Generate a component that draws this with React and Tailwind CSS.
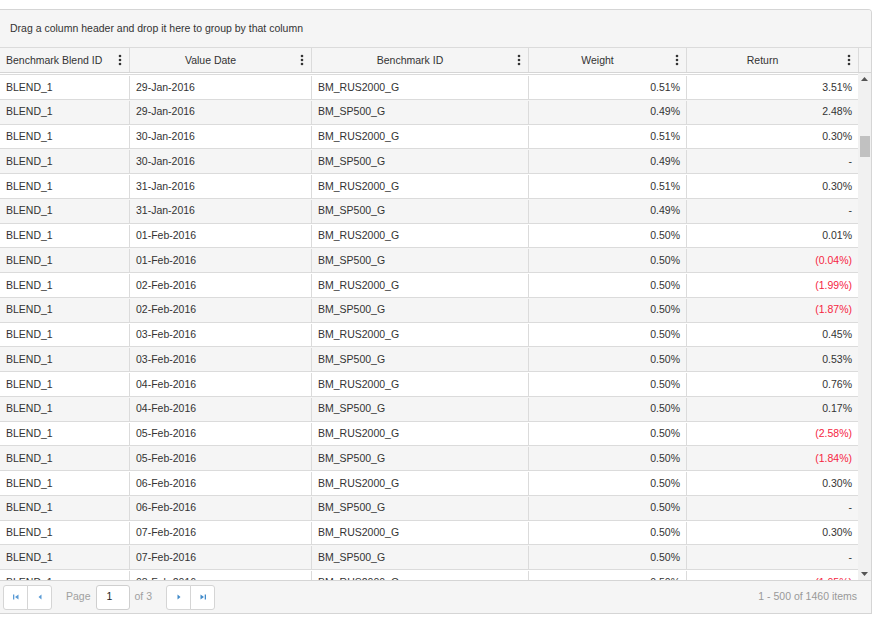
import React from 'react';

const rows = [
  ['29-Jan-2016', 'BM_RUS2000_G', '0.51%', '3.51%'],
  ['29-Jan-2016', 'BM_SP500_G', '0.49%', '2.48%'],
  ['30-Jan-2016', 'BM_RUS2000_G', '0.51%', '0.30%'],
  ['30-Jan-2016', 'BM_SP500_G', '0.49%', '-'],
  ['31-Jan-2016', 'BM_RUS2000_G', '0.51%', '0.30%'],
  ['31-Jan-2016', 'BM_SP500_G', '0.49%', '-'],
  ['01-Feb-2016', 'BM_RUS2000_G', '0.50%', '0.01%'],
  ['01-Feb-2016', 'BM_SP500_G', '0.50%', '(0.04%)'],
  ['02-Feb-2016', 'BM_RUS2000_G', '0.50%', '(1.99%)'],
  ['02-Feb-2016', 'BM_SP500_G', '0.50%', '(1.87%)'],
  ['03-Feb-2016', 'BM_RUS2000_G', '0.50%', '0.45%'],
  ['03-Feb-2016', 'BM_SP500_G', '0.50%', '0.53%'],
  ['04-Feb-2016', 'BM_RUS2000_G', '0.50%', '0.76%'],
  ['04-Feb-2016', 'BM_SP500_G', '0.50%', '0.17%'],
  ['05-Feb-2016', 'BM_RUS2000_G', '0.50%', '(2.58%)'],
  ['05-Feb-2016', 'BM_SP500_G', '0.50%', '(1.84%)'],
  ['06-Feb-2016', 'BM_RUS2000_G', '0.50%', '0.30%'],
  ['06-Feb-2016', 'BM_SP500_G', '0.50%', '-'],
  ['07-Feb-2016', 'BM_RUS2000_G', '0.50%', '0.30%'],
  ['07-Feb-2016', 'BM_SP500_G', '0.50%', '-'],
  ['08-Feb-2016', 'BM_RUS2000_G', '0.50%', '(1.05%)'],
];

const cols = 'grid grid-cols-[129px_182px_217px_158px_172px]';

const Kebab = () => (
  <svg width="4" height="12" viewBox="0 0 4 12" className="absolute right-[7px] top-1/2 -translate-y-1/2">
    <circle cx="2" cy="2" r="1.3" fill="#333" />
    <circle cx="2" cy="6" r="1.3" fill="#333" />
    <circle cx="2" cy="10" r="1.3" fill="#333" />
  </svg>
);

const HeaderCell = ({ children, left }) => (
  <div className={`relative flex items-center h-full pt-px pr-[20px] ${left ? 'pl-[6px]' : 'justify-center border-l border-[#dbdbdb]'}`}>
    <span>{children}</span>
    <Kebab />
  </div>
);

const PagerIcon = ({ dir, bar }) => (
  <svg width="8" height="8" viewBox="0 0 8 8">
    {dir === 'left' ? (
      <>
        {bar && <rect x="1" y="1.5" width="1.3" height="5" fill="#5b9bd5" />}
        <path d={bar ? 'M6.5 1.5 L3 4 L6.5 6.5 Z' : 'M5.5 1.5 L2.5 4 L5.5 6.5 Z'} fill="#5b9bd5" />
      </>
    ) : (
      <>
        <path d={bar ? 'M1.5 1.5 L5 4 L1.5 6.5 Z' : 'M2.5 1.5 L5.5 4 L2.5 6.5 Z'} fill="#428bca" />
        {bar && <rect x="5.7" y="1.5" width="1.3" height="5" fill="#428bca" />}
      </>
    )}
  </svg>
);

const PagerButton = ({ children, first }) => (
  <div className={`w-[25px] h-[25px] flex items-center justify-center bg-white border border-[#d5d5d5] ${first ? 'rounded-l-[3px]' : 'rounded-r-[3px] -ml-px'}`}>
    {children}
  </div>
);

export default function App() {
  return (
    <div className="w-[876px] h-[618px] bg-white overflow-hidden text-[10.5px] text-[#333]" style={{ fontFamily: '"Liberation Sans", Arial, sans-serif' }}>
      <div className="mt-[9px] w-[872px] border-t border-r border-b border-[#d5d5d5] rounded-tr-[4px] overflow-hidden">
        {/* group panel */}
        <div className="h-[38px] bg-[#f5f5f5] border-b border-[#dbdbdb] flex items-center pl-[10px]">
          Drag a column header and drop it here to group by that column
        </div>

        {/* header */}
        <div className="flex h-[25px] bg-[#f5f5f5] border-b border-[#d5d5d5]">
          <div className={`${cols} h-full`}>
            <HeaderCell left>Benchmark Blend ID</HeaderCell>
            <HeaderCell>Value Date</HeaderCell>
            <HeaderCell>Benchmark ID</HeaderCell>
            <HeaderCell>Weight</HeaderCell>
            <HeaderCell>Return</HeaderCell>
          </div>
          <div className="w-[13px] border-l border-[#dbdbdb]" />
        </div>

        {/* body */}
        <div className="flex h-[507px]">
          <div className="w-[858px] overflow-hidden pt-px">
            {rows.map((r, i) => (
              <div key={i} className={`${cols} h-[24.75px] border-t border-[#dbdbdb] pt-px ${i % 2 ? 'bg-[#f5f5f5]' : 'bg-white'}`}>
                <div className="flex items-center pl-[6px]">BLEND_1</div>
                <div className="flex items-center pl-[6px] border-l border-[#dbdbdb]">{r[0]}</div>
                <div className="flex items-center pl-[6px] border-l border-[#dbdbdb]">{r[1]}</div>
                <div className="flex items-center justify-end pr-[6px] border-l border-[#dbdbdb]">{r[2]}</div>
                <div className={`flex items-center justify-end pr-[6px] border-l border-[#dbdbdb] ${r[3].startsWith('(') ? 'text-[#f5263f]' : ''}`}>{r[3]}</div>
              </div>
            ))}
          </div>
          {/* scrollbar */}
          <div className="w-[13px] bg-[#f1f1f1] flex flex-col items-center">
            <div className="h-[9px] mt-[1px] flex items-center">
              <svg width="7" height="4" viewBox="0 0 7 4"><path d="M0 4 L3.5 0 L7 4 Z" fill="#555" /></svg>
            </div>
            <div className="mt-[53px] w-[10px] h-[21px] bg-[#c1c1c1]" />
            <div className="flex-1" />
            <div className="h-[9px] mb-[2px] flex items-center">
              <svg width="7" height="4" viewBox="0 0 7 4"><path d="M0 0 L7 0 L3.5 4 Z" fill="#555" /></svg>
            </div>
          </div>
        </div>

        {/* pager */}
        <div className="h-[33px] bg-[#f5f5f5] border-t border-[#d5d5d5] flex items-center pl-[3px] pr-[14px]">
          <div className="flex">
            <PagerButton first><PagerIcon dir="left" bar /></PagerButton>
            <PagerButton><PagerIcon dir="left" /></PagerButton>
          </div>
          <span className="ml-[14px] text-[#a0a0a0]">Page</span>
          <div className="ml-[5px] w-[34px] h-[25px] bg-white border border-[#cfcfcf] rounded-[3px] flex items-center pl-[10px] text-[#222]">1</div>
          <span className="ml-[5px] text-[#a0a0a0]">of 3</span>
          <div className="flex ml-[14px]">
            <PagerButton first><PagerIcon dir="right" /></PagerButton>
            <PagerButton><PagerIcon dir="right" bar /></PagerButton>
          </div>
          <div className="flex-1" />
          <span className="text-[#999]">1 - 500 of 1460 items</span>
        </div>
      </div>
    </div>
  );
}
